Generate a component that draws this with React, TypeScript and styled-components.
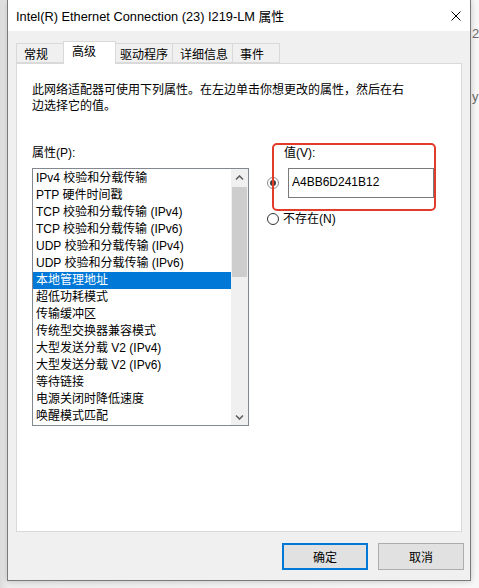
import styled, { createGlobalStyle } from 'styled-components';

const GlobalStyle = createGlobalStyle`
  html, body {
    margin: 0;
    padding: 0;
    background: #f3f3f3;
  }
  body {
    font-family: 'Liberation Sans', 'Noto Sans CJK SC', sans-serif;
    font-size: 12px;
    color: #000;
  }
`;

const Desktop = styled.div`
  position: relative;
  width: 479px;
  height: 588px;
  overflow: hidden;
  background: linear-gradient(to right, #dcdcdc 0, #ececec 7px, #f7f7f7 472px, #f7f7f7 100%);
`;

const BackdropText = styled.span<{ $top: number }>`
  position: absolute;
  left: 472px;
  top: ${(p) => p.$top}px;
  font-size: 13px;
  color: #6b6b6b;
`;

const Window = styled.div`
  position: relative;
  margin-left: 7px;
  width: 464px;
  height: 581px;
  box-sizing: border-box;
  border: 1px solid #7a7a7a;
  border-top: none;
  background: #f0f0f0;
  box-shadow: 0 0 6px rgba(0, 0, 0, 0.22);
  display: flex;
  flex-direction: column;
`;

const TitleBar = styled.div`
  height: 31px;
  background: #fff;
  display: flex;
  align-items: center;
  justify-content: space-between;
  padding: 0 9px 0 8px;
  font-size: 12.8px;
`;

const CloseIcon = () => (
  <svg width="10" height="10" viewBox="0 0 10 10">
    <path d="M0.5 0.5 L9.5 9.5 M9.5 0.5 L0.5 9.5" stroke="#000" strokeWidth="1" />
  </svg>
);

const Body = styled.div`
  flex: 1;
  padding: 10px 0 0 8px;
  display: flex;
  flex-direction: column;
`;

const TabStrip = styled.div`
  display: flex;
  align-items: flex-end;
  height: 22px;
  position: relative;
  z-index: 1;
`;

const Tab = styled.div<{ $w: number; $pad: number; $active?: boolean }>`
  box-sizing: border-box;
  width: ${(p) => p.$w}px;
  height: ${(p) => (p.$active ? 23 : 20)}px;
  margin-bottom: ${(p) => (p.$active ? -1 : 0)}px;
  padding-left: ${(p) => p.$pad}px;
  padding-top: ${(p) => (p.$active ? 2 : 3)}px;
  line-height: 16px;
  border: 1px solid #d9d9d9;
  border-bottom: ${(p) => (p.$active ? 'none' : '1px solid #d9d9d9')};
  margin-left: -1px;
  background: ${(p) => (p.$active ? '#fff' : '#f0f0f0')};
  white-space: nowrap;
  &:first-child {
    margin-left: 0;
  }
`;

const Panel = styled.div`
  box-sizing: border-box;
  width: 446px;
  height: 469px;
  border: 1px solid #d9d9d9;
  background: #fff;
  padding: 18px 15px 0;
`;

const Description = styled.p`
  margin: 0;
  width: 378px;
  line-height: 16px;
`;

const Columns = styled.div`
  display: flex;
  gap: 18px;
  margin-top: 31px;
`;

const LeftColumn = styled.div`
  width: 217px;
  display: flex;
  flex-direction: column;
`;

const FieldLabel = styled.div<{ $indent?: number }>`
  line-height: 16px;
  padding-left: ${(p) => p.$indent ?? 0}px;
`;

const ListBox = styled.div`
  box-sizing: border-box;
  margin-top: 7px;
  height: 258px;
  border: 1px solid #828790;
  display: flex;
`;

const Items = styled.div`
  flex: 1;
  padding-top: 1px;
  overflow: hidden;
`;

const Item = styled.div<{ $selected?: boolean }>`
  height: 17px;
  line-height: 17px;
  padding-left: 3px;
  white-space: nowrap;
  background: ${(p) => (p.$selected ? '#0078d7' : 'transparent')};
  color: ${(p) => (p.$selected ? '#fff' : '#000')};
`;

const ScrollBar = styled.div`
  width: 17px;
  background: #f0f0f0;
  display: flex;
  flex-direction: column;
`;

const ScrollButton = styled.div`
  height: 17px;
  display: flex;
  align-items: center;
  justify-content: center;
`;

const ScrollTrack = styled.div`
  flex: 1;
  padding: 1px 1px 0;
`;

const ScrollThumb = styled.div`
  height: 90px;
  background: #cdcdcd;
`;

const Chevron = ({ down }: { down?: boolean }) => (
  <svg width="9" height="6" viewBox="0 0 9 6">
    <path
      d={down ? 'M1 1.5 L4.5 5 L8 1.5' : 'M1 4.5 L4.5 1 L8 4.5'}
      fill="none"
      stroke="#606060"
      strokeWidth="1.6"
    />
  </svg>
);

const RightColumn = styled.div`
  position: relative;
  flex: 1;
  display: flex;
  flex-direction: column;
`;

const ValueRow = styled.div`
  display: flex;
  align-items: center;
  gap: 9px;
  margin-top: 7px;
`;

const Radio = styled.span<{ $checked?: boolean }>`
  box-sizing: border-box;
  width: 12px;
  height: 12px;
  border-radius: 50%;
  border: 1px solid ${(p) => (p.$checked ? '#8a8a8a' : '#333')};
  display: flex;
  align-items: center;
  justify-content: center;
  flex-shrink: 0;
  &::after {
    content: '';
    width: 6px;
    height: 6px;
    border-radius: 50%;
    background: ${(p) => (p.$checked ? '#3c3c3c' : 'transparent')};
  }
`;

const ValueInput = styled.div`
  box-sizing: border-box;
  width: 146px;
  height: 30px;
  border: 1px solid #7a7a7a;
  padding: 5px 0 0 3px;
  line-height: 16px;
`;

const OptionRow = styled.div`
  display: flex;
  align-items: center;
  gap: 4px;
  margin-top: 13px;
  line-height: 16px;
`;

const Highlight = styled.div`
  position: absolute;
  left: 5px;
  top: -2px;
  width: 164px;
  height: 68px;
  box-sizing: border-box;
  border: 2px solid #e23b2a;
  border-radius: 5px;
  pointer-events: none;
`;

const Footer = styled.div`
  display: flex;
  justify-content: flex-end;
  gap: 10px;
  margin-top: 11px;
  padding-right: 6px;
`;

const Button = styled.div<{ $default?: boolean }>`
  box-sizing: border-box;
  width: 86px;
  height: 27px;
  background: #e1e1e1;
  border: ${(p) => (p.$default ? '2px solid #0078d7' : '1px solid #adadad')};
  display: flex;
  align-items: center;
  justify-content: center;
`;

const tabs = [
  { label: '常规', w: 48, pad: 7 },
  { label: '高级', w: 53, pad: 8, active: true },
  { label: '驱动程序', w: 58, pad: 4 },
  { label: '详细信息', w: 61, pad: 7 },
  { label: '事件', w: 48, pad: 7 },
];

const properties = [
  'IPv4 校验和分载传输',
  'PTP 硬件时间戳',
  'TCP 校验和分载传输 (IPv4)',
  'TCP 校验和分载传输 (IPv6)',
  'UDP 校验和分载传输 (IPv4)',
  'UDP 校验和分载传输 (IPv6)',
  '本地管理地址',
  '超低功耗模式',
  '传输缓冲区',
  '传统型交换器兼容模式',
  '大型发送分载 V2 (IPv4)',
  '大型发送分载 V2 (IPv6)',
  '等待链接',
  '电源关闭时降低速度',
  '唤醒模式匹配',
];

export default function App() {
  return (
    <>
      <GlobalStyle />
      <Desktop>
        <BackdropText $top={26}>21</BackdropText>
        <BackdropText $top={89}>y</BackdropText>
        <Window>
          <TitleBar>
            <span>Intel(R) Ethernet Connection (23) I219-LM 属性</span>
            <CloseIcon />
          </TitleBar>
          <Body>
            <TabStrip>
              {tabs.map((t) => (
                <Tab key={t.label} $w={t.w} $pad={t.pad} $active={t.active}>
                  {t.label}
                </Tab>
              ))}
            </TabStrip>
            <Panel>
              <Description>
                此网络适配器可使用下列属性。在左边单击你想更改的属性，然后在右边选择它的值。
              </Description>
              <Columns>
                <LeftColumn>
                  <FieldLabel>属性(P):</FieldLabel>
                  <ListBox>
                    <Items>
                      {properties.map((name) => (
                        <Item key={name} $selected={name === '本地管理地址'}>
                          {name}
                        </Item>
                      ))}
                    </Items>
                    <ScrollBar>
                      <ScrollButton>
                        <Chevron />
                      </ScrollButton>
                      <ScrollTrack>
                        <ScrollThumb />
                      </ScrollTrack>
                      <ScrollButton>
                        <Chevron down />
                      </ScrollButton>
                    </ScrollBar>
                  </ListBox>
                </LeftColumn>
                <RightColumn>
                  <FieldLabel $indent={17}>值(V):</FieldLabel>
                  <ValueRow>
                    <Radio $checked />
                    <ValueInput>A4BB6D241B12</ValueInput>
                  </ValueRow>
                  <OptionRow>
                    <Radio />
                    <span>不存在(N)</span>
                  </OptionRow>
                  <Highlight />
                </RightColumn>
              </Columns>
            </Panel>
            <Footer>
              <Button $default>确定</Button>
              <Button>取消</Button>
            </Footer>
          </Body>
        </Window>
      </Desktop>
    </>
  );
}
